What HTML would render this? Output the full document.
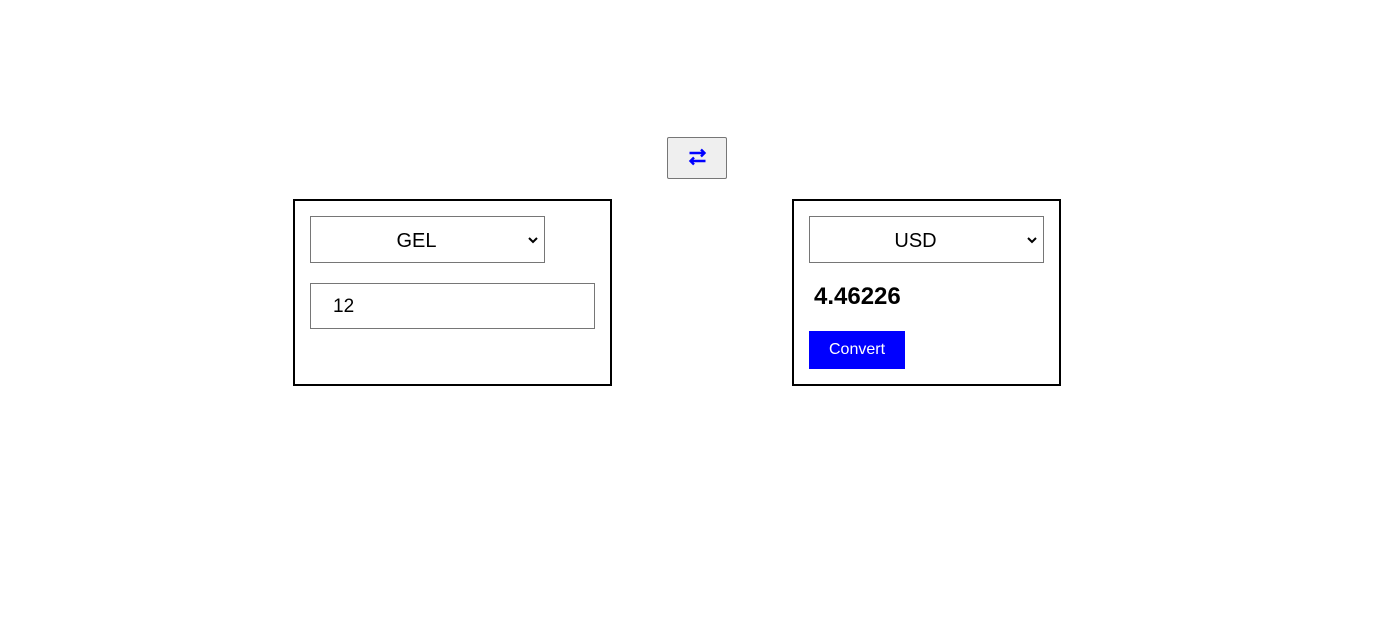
<!DOCTYPE html>
<html><head><meta charset="utf-8"><style>
body{margin:0;width:1393px;height:622px;background:#fff;font-family:"Liberation Sans",Arial,sans-serif;position:relative;overflow:hidden}
.abs{position:absolute;box-sizing:border-box}
.box{border:2px solid #000}
.sel{border:1px solid #767676;background:#fff;font-size:20px;text-align:center;line-height:49px;padding-right:22px}
.chev{position:absolute;right:6px;top:19px}
</style></head><body>
<div class="abs" style="left:667px;top:137px;width:60px;height:42px;background:#efefef;border:1px solid #767676;border-radius:2px">
<svg width="60" height="42" style="position:absolute;left:-1px;top:-1px">
<path d="M22.5 16H37.5M34 12.5l3.5 3.5-3.5 3.5" stroke="#00f" stroke-width="2.4" fill="none"/>
<path d="M38.5 24H23.5M27 20.5l-3.5 3.5 3.5 3.5" stroke="#00f" stroke-width="2.4" fill="none"/>
</svg></div>
<div class="abs box" style="left:293px;top:199px;width:319px;height:187px"></div>
<div class="abs sel" style="left:310px;top:216px;width:235px;height:47px">GEL<svg class="chev" width="10" height="8"><path d="M1 2l4 4 4-4" stroke="#000" stroke-width="2" fill="none"/></svg></div>
<div class="abs" style="left:310px;top:283px;width:285px;height:46px;border:1px solid #767676;font-size:19px;line-height:46px;padding-left:22px">12</div>
<div class="abs box" style="left:792px;top:199px;width:269px;height:187px"></div>
<div class="abs sel" style="left:809px;top:216px;width:235px;height:47px">USD<svg class="chev" width="10" height="8"><path d="M1 2l4 4 4-4" stroke="#000" stroke-width="2" fill="none"/></svg></div>
<div class="abs" style="left:814px;top:283px;font-size:24px;font-weight:bold;line-height:28px">4.46226</div>
<div class="abs" style="left:809px;top:331px;width:96px;height:38px;background:#00f;color:#fff;font-size:16px;line-height:38px;text-align:center">Convert</div>
</body></html>
